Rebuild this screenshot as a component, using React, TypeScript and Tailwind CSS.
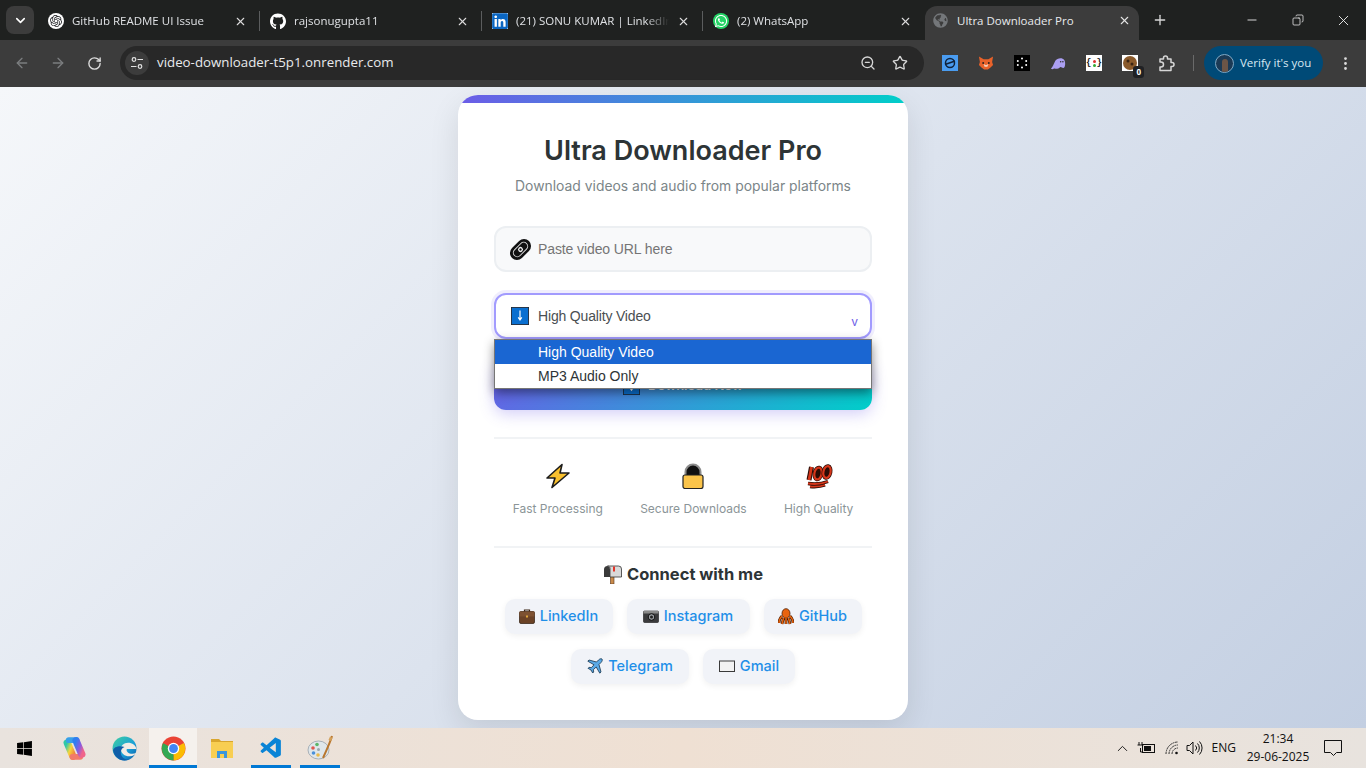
import React from "react";
import { ArrowLeft, ArrowRight, RotateCw, ChevronDown, ChevronUp, X, Plus, Minus, ZoomOut, Star, EllipsisVertical, Copy } from "lucide-react";
import { FaGithub, FaLinkedin, FaWhatsapp, FaGlobeAmericas, FaWindows } from "react-icons/fa";
import { SiOpenai } from "react-icons/si";
import { VscVscode } from "react-icons/vsc";

const tabs = [
    { title: "GitHub README UI Issue", w: "w-[222px]", icon: <span className="flex w-4 h-4 items-center justify-center rounded-full bg-white text-[#202124]"><SiOpenai size={12} /></span> },
    { title: "rajsonugupta11", w: "w-[222px]", icon: <FaGithub size={17} className="text-white" /> },
    { title: "(21) SONU KUMAR | LinkedIn", w: "w-[221px]", icon: <span className="flex w-4 h-4 items-center justify-center bg-white"><FaLinkedin size={18} className="text-[#0a66c2]" /></span> },
    { title: "(2) WhatsApp", w: "w-[222px]", icon: <span className="flex w-4 h-4 items-center justify-center rounded-full bg-[#25d366] text-white"><FaWhatsapp size={14} /></span> },
];

const DownloadBox = ({ size = 18 }: { size?: number }) => (
    <svg width={size} height={size} viewBox="0 0 20 20">
        <rect x="0.5" y="0.5" width="19" height="19" fill="#0a6fd0" stroke="#1d2a3a" />
        <path d="M10 4v10M8 11.500l2 3 2-3" stroke="#fff" strokeWidth="1.300" fill="none" />
    </svg>
);

const LinkIcon = () => (
    <svg width="23" height="23" viewBox="0 0 23 23">
        <g transform="rotate(-45 11.500 11.500)">
            <rect x="-0.500" y="4.500" width="24" height="14" rx="7" fill="#111" />
            <rect x="3" y="7.500" width="17" height="8" rx="4" fill="none" stroke="#ddd" strokeWidth="1" />
            <circle cx="11.500" cy="11.500" r="2.500" fill="#eee" />
            <circle cx="11.500" cy="11.500" r="1.200" fill="#111" />
        </g>
    </svg>
);

const BoltIcon = () => (
    <svg width="26" height="26" viewBox="0 0 26 26">
        <path d="M17 1.500 2 15h8L7 24.500 24 10h-9z" fill="#f9c02e" stroke="#1c1c1c" strokeWidth="1.600" strokeLinejoin="round" />
    </svg>
);

const LockIcon = () => (
    <svg width="22" height="26" viewBox="0 0 22 26">
        <path d="M3.500 14V9a7.500 7.500 0 0 1 15 0v5" fill="#111" stroke="#8c8c8c" strokeWidth="2" />
        <rect x="1" y="12" width="20" height="13.500" rx="2" fill="#fbc44a" stroke="#222" strokeWidth="1.200" />
    </svg>
);

const HundredIcon = () => (
    <svg width="28" height="26" viewBox="0 0 28 26">
        <path d="M3 20.500c7 1 15 0 20-2M5 23.500c6 .5 11 0 15-1.500" stroke="#2a0c06" strokeWidth="3.400" fill="none" />
        <path d="M3 20.500c7 1 15 0 20-2M5 23.500c6 .5 11 0 15-1.500" stroke="#d6361a" strokeWidth="1.800" fill="none" />
        <path d="M6.500 4 4 17" stroke="#2a0c06" strokeWidth="5" fill="none" />
        <path d="M6.500 4 4 17" stroke="#d6361a" strokeWidth="2.800" fill="none" />
        <ellipse cx="13" cy="10.500" rx="3.600" ry="6" transform="rotate(12 13 10.500)" fill="#2a0c06" stroke="#2a0c06" strokeWidth="3.600" />
        <ellipse cx="13" cy="10.500" rx="3.600" ry="6" transform="rotate(12 13 10.500)" fill="none" stroke="#d6361a" strokeWidth="2.200" />
        <ellipse cx="22" cy="9" rx="3.600" ry="6" transform="rotate(12 22 9)" fill="#2a0c06" stroke="#2a0c06" strokeWidth="3.600" />
        <ellipse cx="22" cy="9" rx="3.600" ry="6" transform="rotate(12 22 9)" fill="none" stroke="#d6361a" strokeWidth="2.200" />
    </svg>
);

const MailboxIcon = () => (
    <svg width="19" height="19" viewBox="0 0 19 19">
        <rect x="7.500" y="11" width="3.500" height="8" fill="#c98a4a" stroke="#55331a" strokeWidth=".600" />
        <path d="M4.500 1h11a3 3 0 0 1 3 3v8H7V4a2.500 2.500 0 0 0-2.500-3z" fill="#d9d9d9" stroke="#333" strokeWidth=".800" />
        <path d="M4.500 1A3.500 3.500 0 0 0 1 4.500V12h6V4.500A3.500 3.500 0 0 0 4.500 1z" fill="#3a3a3a" />
        <rect x="10" y="1.500" width="2" height="5" fill="#e5352b" />
    </svg>
);

const Briefcase = () => (
    <svg width="16" height="16" viewBox="0 0 16 16">
        <path d="M5.500 4V2h5v2" fill="none" stroke="#3a2414" strokeWidth="1.200" />
        <rect x="0.500" y="3.500" width="15" height="12" rx="1.500" fill="#6b4226" stroke="#2f1c0f" strokeWidth=".700" />
        <rect x="0.500" y="3.500" width="15" height="5" fill="#7d5131" />
        <rect x="7" y="7.500" width="2" height="2" fill="#e0a63a" />
    </svg>
);

const Camera = () => (
    <svg width="16" height="16" viewBox="0 0 16 16">
        <rect x="0.500" y="3" width="15" height="11.500" rx="1" fill="#3a3a3c" stroke="#1a1a1a" strokeWidth=".600" />
        <rect x="0.500" y="3" width="15" height="2.500" fill="#8a8a8a" />
        <circle cx="8.500" cy="9" r="3.300" fill="#9b9ea3" stroke="#111" strokeWidth="1" />
        <circle cx="8.500" cy="9" r="1.500" fill="#222" />
    </svg>
);

const Octopus = () => (
    <svg width="16" height="17" viewBox="0 0 16 17">
        <ellipse cx="8" cy="5.500" rx="4" ry="4.800" fill="#e8630e" stroke="#4a1d04" strokeWidth=".800" />
        <path d="M4 8C2 10 1 12 1 15M5.500 10 4 16M8 10v6M10.500 10 12 16M12 8c2 2 3 4 3 7" stroke="#4a1d04" strokeWidth="2.800" fill="none" />
        <path d="M4 8C2 10 1 12 1 15M5.500 10 4 16M8 10v6M10.500 10 12 16M12 8c2 2 3 4 3 7" stroke="#e8630e" strokeWidth="1.500" fill="none" />
    </svg>
);

const Plane = () => (
    <svg width="16" height="16" viewBox="0 0 16 16">
        <path d="M15 1c-1-.7-2.500 0-3.500 1L9.500 4 2 2 .8 3.200 7 6.800 4.300 9.700l-2.300-.4-1 1 3 1.700 1.700 3 1-1-.4-2.300L9.200 9l3.600 6.200L14 14l-2-7.500 2-2c1-1 1.700-2.500 1-3.500z" fill="#5aa9e6" stroke="#16324a" strokeWidth=".800" strokeLinejoin="round" />
    </svg>
);

const Envelope = () => (
    <svg width="16" height="16" viewBox="0 0 16 16">
        <rect x="0.500" y="3" width="15" height="10.500" fill="#f2f2f2" stroke="#3a3a3a" strokeWidth="1" />
    </svg>
);

const socials: { label: string; icon: React.ReactNode; w: string }[][] = [
    [
        { label: "LinkedIn", icon: <Briefcase />, w: "w-[108px]" },
        { label: "Instagram", icon: <Camera />, w: "w-[123px]" },
        { label: "GitHub", icon: <Octopus />, w: "w-[98px]" },
    ],
    [
        { label: "Telegram", icon: <Plane />, w: "w-[118px]" },
        { label: "Gmail", icon: <Envelope />, w: "w-[92px]" },
    ],
];

const features = [
    { label: "Fast Processing", icon: <BoltIcon /> },
    { label: "Secure Downloads", icon: <LockIcon /> },
    { label: "High Quality", icon: <HundredIcon /> },
];

const ChromeIcon = () => (
    <svg width="25" height="25" viewBox="0 0 48 48">
        <circle cx="24" cy="24" r="23" fill="#ea4335" />
        <path d="M24 24 44 13.500A23 23 0 0 1 24 47z" fill="#fbbc04" />
        <path d="M24 24 24 47A23 23 0 0 1 4 13.500z" fill="#34a853" />
        <path d="M24 24 4 13.500A23 23 0 0 1 6 10l18 14z" fill="#ea4335" />
        <circle cx="24" cy="24" r="11" fill="#fff" />
        <circle cx="24" cy="24" r="8.500" fill="#4285f4" />
    </svg>
);

const EdgeIcon = () => (
    <svg width="25" height="25" viewBox="0 0 48 48">
        <defs>
            <linearGradient id="edgeA" x1="0" y1="0" x2="1" y2="1">
                <stop offset="0" stopColor="#3fd0a0" />
                <stop offset="0.600" stopColor="#1a9fd8" />
                <stop offset="1" stopColor="#0c59a4" />
            </linearGradient>
        </defs>
        <circle cx="24" cy="24" r="23" fill="url(#edgeA)" />
        <path d="M47 27c0-10-9-14-16-14-9 0-14 6-14 12 0 9 9 15 18 14 5-.6 9-3 12-7-5 3-13 3-17-1-2-2-3-5-1-6h18z" fill="#f1ece6" />
        <path d="M2 28c2 11 11 19 22 19 3 0 6-.6 9-2-10 1-17-7-16-15 .4-4 3-8 7-9-10-3-21 0-22 7z" fill="#0f5ea8" />
    </svg>
);

const CopilotIcon = () => (
    <svg width="25" height="25" viewBox="0 0 48 48" fill="none" strokeLinecap="round">
        <defs>
            <linearGradient id="copA" x1="0" y1="0" x2="1" y2="1">
                <stop offset="0" stopColor="#2f7ff0" />
                <stop offset="0.550" stopColor="#8a5be0" />
                <stop offset="1" stopColor="#f0648a" />
            </linearGradient>
            <linearGradient id="copB" x1="1" y1="1" x2="0" y2="0">
                <stop offset="0" stopColor="#f08a3c" />
                <stop offset="0.500" stopColor="#f5d63d" />
                <stop offset="1" stopColor="#2fc8a8" />
            </linearGradient>
        </defs>
        <path d="M21 39 10 13" stroke="url(#copB)" strokeWidth="14" />
        <path d="M13 8h15" stroke="#37a0e8" strokeWidth="11" />
        <path d="M20 40h15" stroke="#f27a6a" strokeWidth="11" />
        <path d="M27 9 38 35" stroke="url(#copA)" strokeWidth="14" />
    </svg>
);

const FolderIcon = () => (
    <svg width="24" height="24" viewBox="0 0 24 24">
        <path d="M1 3h8l2 2h12v3H1z" fill="#d9a62e" />
        <rect x="1" y="6" width="22" height="16" fill="#f8ce52" />
        <path d="M7 22v-7h10v7h-3v-4h-4v4z" fill="#3a96dd" />
    </svg>
);

const PaletteIcon = () => (
    <svg width="26" height="26" viewBox="0 0 26 26">
        <ellipse cx="11.500" cy="15" rx="10.500" ry="9" fill="#dfe6ea" stroke="#8b9aa5" strokeWidth=".700" />
        <circle cx="6" cy="13" r="1.800" fill="#e0574f" />
        <circle cx="10" cy="9.500" r="1.800" fill="#5db56a" />
        <circle cx="6.500" cy="18" r="1.800" fill="#4a90d9" />
        <circle cx="11" cy="20" r="1.800" fill="#e9b949" />
        <circle cx="11.500" cy="14.500" r="1.500" fill="#9aa7b0" />
        <path d="M25 1c-1 4-4 11-9 22" stroke="#b9772f" strokeWidth="2" fill="none" />
        <path d="M23 1.500 25.500 3l-1.500 3-2.500-1z" fill="#d4a15a" />
    </svg>
);

const BatteryIcon = () => (
    <svg width="18" height="14" viewBox="0 0 18 14" fill="none" stroke="#111" strokeWidth="1">
        <rect x="5.500" y="3.500" width="12" height="8" />
        <rect x="7" y="5" width="7" height="5" fill="#111" stroke="none" />
        <path d="M2 1v3M5 1v3M0.500 4h6M3.500 7v4h2" />
    </svg>
);

const WifiIcon = () => (
    <svg width="16" height="14" viewBox="0 0 16 14" fill="none" stroke="#333" strokeWidth="1">
        <path d="M1 13A12 12 0 0 1 13 1M4 13a9 9 0 0 1 9-9M7 13a6 6 0 0 1 6-6" strokeDasharray="2 .6" />
        <circle cx="11.500" cy="12" r="1.300" fill="#111" stroke="none" />
    </svg>
);

const VolumeIcon = () => (
    <svg width="17" height="16" viewBox="0 0 17 16" fill="none" stroke="#111" strokeWidth="1">
        <path d="M1 5.500h2.500L7 2v12l-3.500-3.500H1z" />
        <path d="M9.500 5.500a3.500 3.500 0 0 1 0 5M11.500 3.500a6.500 6.500 0 0 1 0 9M13.500 1.500a9.500 9.500 0 0 1 0 13" />
    </svg>
);

const extensions = [
    <span key="a" className="flex w-4 h-4 items-center justify-center bg-[#4a9cf0]"><svg width="12" height="12" viewBox="0 0 12 12" fill="none" stroke="#10233c" strokeWidth="1.500"><circle cx="6" cy="6" r="4.500" /><path d="M1 7.500 11 4" /></svg></span>,
    <span key="b" className="flex w-4 h-4 items-center justify-center"><svg width="16" height="16" viewBox="0 0 17 16"><path d="M1 1l5 3h5l5-3-1 6 1 3-3 3-2.500 2h-4L4 13l-3-3 1-3z" fill="#e8622a" /><path d="M6 9 7 12h3l1-3-2.500 1.500z" fill="#f3d6c4" /><circle cx="5.500" cy="8" r="1" fill="#222" /><circle cx="11.500" cy="8" r="1" fill="#222" /></svg></span>,
    <span key="c" className="flex w-4 h-4 items-center justify-center bg-black"><svg width="12" height="12" viewBox="0 0 12 12" fill="#fff"><circle cx="6" cy="1.500" r="1" /><circle cx="6" cy="10.500" r="1" /><circle cx="1.800" cy="4" r="1" /><circle cx="10.200" cy="4" r="1" /><circle cx="1.800" cy="8" r="1" /><circle cx="10.200" cy="8" r="1" /></svg></span>,
    <span key="d" className="flex w-4 h-4 items-center justify-center"><svg width="16" height="13" viewBox="0 0 18 14"><path d="M1 13C3 11 4 8 6 4c2-3.500 8-4 10-1 2 3 1 9-1 9-1.500 0-2-1-3-1s-2 2-4 2-3-1-4 0-2 0-3 0z" fill="#ab9ff2" /><circle cx="12" cy="5" r=".900" fill="#333" /><circle cx="14.500" cy="5" r=".900" fill="#333" /></svg></span>,
    <span key="e" className="flex w-4 h-4 items-center justify-center gap-[1px] bg-white text-[9px] leading-none font-bold text-[#222] font-['Liberation_Mono',monospace]">{"{"}<span className="flex flex-col gap-[1px]"><span className="w-[3px] h-[3px] rounded-full bg-[#d33]" /><span className="w-[3px] h-[3px] rounded-full bg-[#3a3]" /></span>{"}"}</span>,
];

const App: React.FC = () => {
    return (
        <div className="flex h-[768px] w-[1366px] flex-col overflow-hidden font-['Open_Sans',sans-serif]">
            {/* tab strip */}
            <div className="flex h-10 shrink-0 bg-[#1f2120] pt-1.5">
                <div className="ml-1.5 flex h-7 w-7 items-center justify-center rounded-lg bg-[#3c3c3c] text-white">
                    <ChevronDown size={15} strokeWidth={2.5} />
                </div>
                <div className="ml-1 flex">
                    {tabs.map((t, i) => (
                        <div key={t.title} className={`flex h-[34px] items-center pb-1 pl-2.5 ${t.w}`}>
                            <span className="flex w-4 shrink-0 justify-center">{t.icon}</span>
                            <span className="ml-2 w-[138px] grow overflow-hidden whitespace-nowrap text-[11.500px] text-[#dfe1e4] [mask-image:linear-gradient(90deg,#000_85%,transparent)]">{t.title}</span>
                            <X size={13} className="ml-2 shrink-0 text-[#dcdcdc]" />
                            <span className={`ml-3 h-5 w-px shrink-0 ${i === 3 ? "bg-transparent" : "bg-[#5b5d5e]"}`} />
                        </div>
                    ))}
                </div>
                <div className="flex h-[34px] w-[214px] items-center rounded-t-xl bg-[#3c3c3c] pb-[5px] pl-2">
                    <FaGlobeAmericas size={15} className="shrink-0 text-[#74777a]" />
                    <span className="ml-[9px] grow text-[11.500px] text-[#e8eaed]">Ultra Downloader Pro</span>
                    <X size={13} className="mr-2 text-[#e4e4e4]" />
                </div>
                <Plus size={16} className="ml-[13px] mt-1.5 text-[#d8d8d8]" />
                <div className="ml-auto flex h-[28px] items-center text-[#f0f0f0]">
                    <Minus size={14} strokeWidth={1.5} className="mr-[33px]" />
                    <Copy size={12} strokeWidth={1.5} className="mr-[31px] -scale-x-100" />
                    <X size={17} strokeWidth={1.3} className="mr-[14px]" />
                </div>
            </div>

            {/* toolbar */}
            <div className="flex h-[47px] shrink-0 items-center bg-[#3c3c3c] pb-px">
                <ArrowLeft size={16} className="ml-3.5 text-[#7b7d7f]" />
                <ArrowRight size={16} className="ml-5 text-[#7b7d7f]" />
                <RotateCw size={15} strokeWidth={2.2} className="ml-[21px] text-[#dcdcdc]" />
                <div className="ml-[18px] flex h-[34px] w-[804px] items-center rounded-full bg-[#282828] pl-[5px]">
                    <span className="flex h-6 w-6 items-center justify-center rounded-full bg-[#3c3c3c]">
                        <svg width="14" height="14" viewBox="0 0 14 14" fill="none" stroke="#e3e3e3" strokeWidth="1.200">
                            <circle cx="4" cy="3.500" r="1.800" />
                            <path d="M7.500 3.500H13M1 10.500h5.500" />
                            <circle cx="10" cy="10.500" r="1.800" />
                        </svg>
                    </span>
                    <span className="ml-2 text-[13.300px] text-[#e8eaed]">video-downloader-t5p1.onrender.com</span>
                    <ZoomOut size={16} className="ml-auto text-[#d6d6d6]" />
                    <Star size={16} className="ml-4 mr-4 text-[#d6d6d6]" />
                </div>
                <div className="ml-[18px] flex items-center gap-5">
                    {extensions}
                    <span className="relative flex w-4 h-4 items-center justify-center bg-white">
                        <svg width="16" height="16" viewBox="0 0 16 16"><circle cx="8" cy="8" r="7" fill="#8a5a2b" /><circle cx="6" cy="6" r="1.500" fill="#3a2412" /><circle cx="10" cy="9" r="1.500" fill="#3a2412" /></svg>
                        <span className="absolute -bottom-[7px] -right-[6px] rounded-[3px] bg-[#202124] px-[3px] text-[8px] font-bold leading-[12px] text-white">0</span>
                    </span>
                    <svg width="17" height="17" viewBox="0 0 17 17" fill="none" stroke="#d6d6d6" strokeWidth="1.500" strokeLinejoin="round">
                        <path d="M2 4h3.500V3a2 2 0 0 1 4 0v1H13v3.500h1a2 2 0 0 1 0 4h-1V15.500H2v-3.500h1a2.500 2.500 0 0 0 0-5H2z" />
                    </svg>
                </div>
                <span className="ml-[18px] h-[16px] w-px bg-[#6a6a6a]" />
                <div className="ml-[10px] flex h-[34px] w-[119px] items-center rounded-full bg-[#004a77] pl-[11px]">
                    <span className="flex h-[19px] w-[19px] items-end justify-center overflow-hidden rounded-full border border-[#7fa8c4] bg-[#1b3a55]">
                        <span className="h-[13px] w-[6px] rounded-t-sm bg-[#6b5547]" />
                    </span>
                    <span className="ml-[6px] text-[11.500px] text-[#d9e8f3]">Verify it's you</span>
                </div>
                <EllipsisVertical size={17} className="ml-3.5 text-[#dcdcdc]" />
            </div>

            {/* page */}
            <div className="flex h-[641px] shrink-0 justify-center bg-[linear-gradient(135deg,#f5f7fa_0%,#c3cfe2_100%)] pt-2 font-['Inter',sans-serif]">
                <div className="h-[625px] w-[450px] overflow-hidden rounded-[20px] bg-white shadow-[0_10px_30px_rgba(0,0,0,0.1)]">
                    <div className="h-2 bg-[linear-gradient(90deg,#6c5ce7,#00cec9)]" />
                    <div className="px-9">
                        <h1 className="mt-8 text-center text-[27px] font-semibold leading-8 text-[#2d3436]">Ultra Downloader Pro</h1>
                        <p className="mt-[9px] text-center text-[13.900px] leading-5 text-[#7b8588]">Download videos and audio from popular platforms</p>

                        <div className="mt-[30px] flex h-[46px] items-center rounded-xl border-2 border-[#eceff2] bg-[#f8f9fa] pl-[13px]">
                            <LinkIcon />
                            <input placeholder="Paste video URL here" className="ml-[6px] w-[300px] bg-transparent text-[14px] tracking-[-0.1px] font-['Liberation_Sans',sans-serif] outline-none placeholder:text-[#757575]" />
                        </div>

                        <div className="relative mt-[21px]">
                            <div className="flex h-[46px] items-center rounded-xl border-2 border-[#a29bfe] bg-white pl-[15px] shadow-[0_0_0_3px_rgba(108,92,231,0.1)]">
                                <DownloadBox />
                                <span className="ml-[9px] font-['Liberation_Sans',sans-serif] text-[14px] tracking-[-0.17px] text-[#4a4f52]">High Quality Video</span>
                                <span className="ml-auto mr-3 mt-3 text-[12px] leading-none text-[#6c5ce7]">v</span>
                            </div>
                            {/* open native style option list */}
                            <div className="absolute left-0 top-[46px] z-10 w-full border border-[#767676] bg-white font-['Liberation_Sans',sans-serif] text-[14px] shadow-[0_4px_10px_rgba(0,0,0,0.45)]">
                                <div className="h-6 bg-[#1a66d2] pl-[43px] leading-6 text-white">High Quality Video</div>
                                <div className="h-6 pl-[43px] leading-6 text-[#2d3436]">MP3 Audio Only</div>
                            </div>
                        </div>

                        <div className="mt-5 flex h-[51px] items-center justify-center gap-2 rounded-xl bg-[linear-gradient(135deg,#6c5ce7,#00cec9)] pt-[3px] shadow-[0_4px_15px_rgba(108,92,231,0.3)]">
                            <DownloadBox size={17} />
                            <span className="text-[13px] font-semibold text-[#e6f2fa]">Download Now</span>
                        </div>

                        <div className="mt-[27px] flex h-[111px] justify-around border-y-2 border-[#f1f3f5] pt-[24px]">
                            {features.map((f) => (
                                <div key={f.label} className="flex flex-col items-center">
                                    <div className="flex h-[26px] items-center">{f.icon}</div>
                                    <span className="mt-[11px] text-[12px] leading-[18px] text-[#8b9598]">{f.label}</span>
                                </div>
                            ))}
                        </div>

                        <h3 className="mt-[14px] flex items-center justify-center gap-[5px] text-[16.500px] font-bold leading-6 text-[#2d3436]">
                            <MailboxIcon />
                            Connect with me
                        </h3>
                        <div className="mt-[13px] flex flex-col gap-[15px]">
                            {socials.map((row, i) => (
                                <div key={i} className="flex justify-center gap-[14px]">
                                    {row.map((s) => (
                                        <a key={s.label} className={`flex h-[35px] items-center justify-center gap-[5px] rounded-[10px] bg-[#f1f3f8] pb-px text-[14.500px] font-medium text-[#1f8fe8] shadow-[0_2px_6px_rgba(0,0,0,0.06)] ${s.w}`}>
                                            {s.icon}
                                            {s.label}
                                        </a>
                                    ))}
                                </div>
                            ))}
                        </div>
                    </div>
                </div>
            </div>

            {/* windows taskbar */}
            <div className="flex h-10 shrink-0 items-center bg-[linear-gradient(90deg,#e9e3de,#efe0d3_50%,#e8e3de)] text-[#111]">
                <div className="flex w-[49px] justify-center"><FaWindows size={17} className="text-black" /></div>
                <div className="flex w-[50px] justify-center"><CopilotIcon /></div>
                <div className="flex w-[50px] justify-center"><EdgeIcon /></div>
                <div className="flex h-10 w-12 items-center justify-center border-b-[3px] border-[#0078d4] bg-[#f5f1ed] pt-[3px]"><ChromeIcon /></div>
                <div className="flex w-[50px] justify-center"><FolderIcon /></div>
                <div className="ml-[4px] flex h-10 w-10 items-center justify-center border-b-[3px] border-[#0078d4] pt-[3px]"><VscVscode size={25} className="text-[#0a84d6]" /></div>
                <div className="ml-[9px] flex h-10 w-10 items-center justify-center border-b-[3px] border-[#0078d4] pt-[3px]"><PaletteIcon /></div>

                <div className="ml-auto flex items-center">
                    <ChevronUp size={17} strokeWidth={1.3} />
                    <span className="ml-[6px]"><BatteryIcon /></span>
                    <span className="ml-[10px]"><WifiIcon /></span>
                    <span className="ml-[5px]"><VolumeIcon /></span>
                    <span className="ml-[9px] text-[12px]">ENG</span>
                    <div className="ml-[11px] flex w-[62px] flex-col items-center whitespace-nowrap text-[12px] leading-[18px]">
                        <span>21:34</span>
                        <span>29-06-2025</span>
                    </div>
                    <svg width="18" height="17" viewBox="0 0 18 17" fill="none" stroke="#111" className="ml-[15px] mr-[24px]">
                        <path d="M.5.500h17v12h-5l-3 3-3-3h-6z" />
                    </svg>
                </div>
            </div>
        </div>
    );
};

export default App;
